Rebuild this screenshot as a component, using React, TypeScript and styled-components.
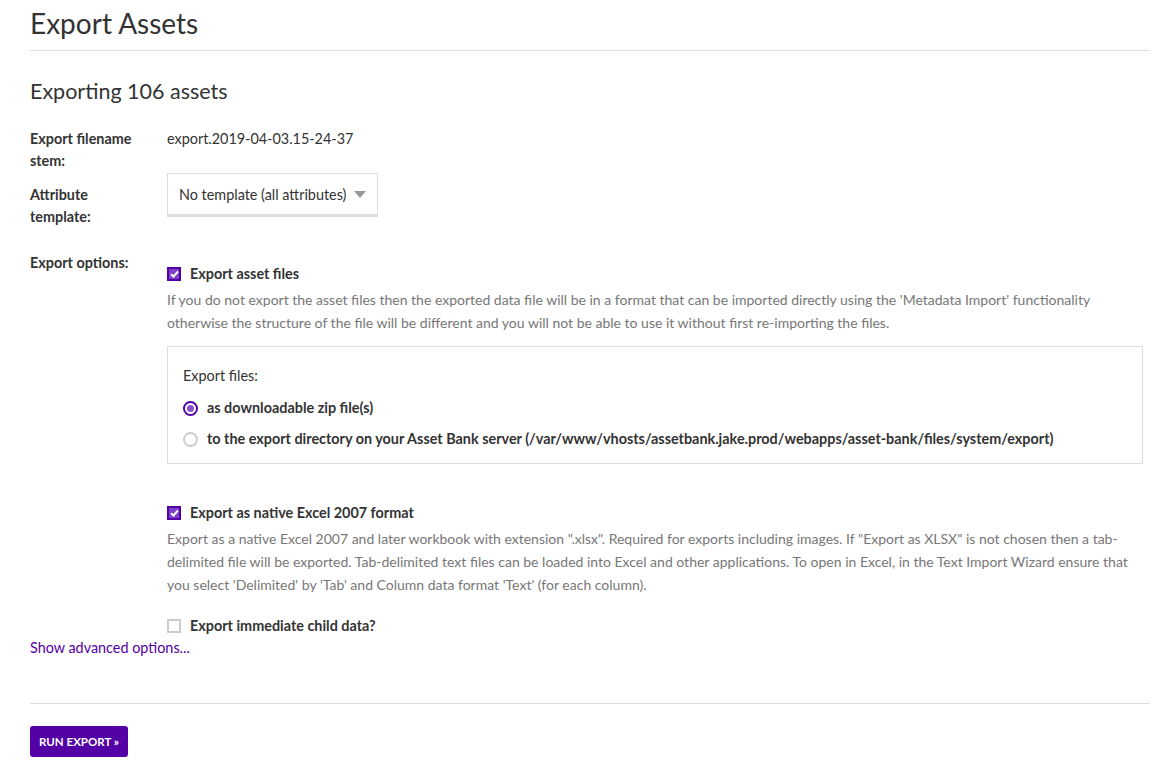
import React, { FunctionComponent } from "react";
import styled, { createGlobalStyle } from "styled-components";

const GlobalStyle = createGlobalStyle`
  body {
    margin: 0;
    background: #fff;
    color: #333;
    font-family: Lato, "Open Sans", sans-serif;
    font-size: 14.4px;
  }
`;

const purple = "#5300a7";

const Page = styled.div`
  padding: 0 8px 11px 30px;
`;

const Title = styled.h1`
  margin: 0;
  padding: 6px 0 10px;
  font-size: 28px;
  font-weight: 400;
  line-height: 34px;
  border-bottom: 1px solid #ddd;
`;

const SubTitle = styled.h2`
  margin: 0;
  padding: 27px 0 24px;
  font-size: 21.5px;
  font-weight: 400;
  line-height: 26px;
`;

const Row = styled.div<{ gap?: number }>`
  display: grid;
  grid-template-columns: 137px 1fr;
  margin-bottom: ${p => p.gap ?? 0}px;
`;

const Label = styled.div`
  font-weight: 700;
  line-height: 22px;
  padding-right: 30px;
`;

const Value = styled.div`
  line-height: 22px;
`;

const Select = styled.div`
  display: inline-flex;
  align-items: center;
  gap: 8px;
  padding: 0 11px;
  margin-top: -11px;
  border: 1px solid #ddd;
  border-bottom: 3px solid #ddd;
  box-sizing: border-box;
  height: 44px;
`;

const Caret = styled.span`
  width: 0;
  height: 0;
  border-left: 6px solid transparent;
  border-right: 6px solid transparent;
  border-top: 7px solid #999;
`;

const Options = styled.div`
  padding-top: 11px;
`;

const CheckRow = styled.label`
  display: flex;
  align-items: center;
  gap: 9px;
  font-weight: 700;
  line-height: 22px;
`;

const Box = styled.span<{ checked?: boolean }>`
  width: 14px;
  height: 14px;
  box-sizing: border-box;
  display: inline-flex;
  align-items: center;
  justify-content: center;
  background: ${p => (p.checked ? "#7e3fc9" : "#fff")};
  border: 2px solid ${p => (p.checked ? purple : "#ccc")};
`;

const Help = styled.p`
  margin: 3px 0 0;
  color: #777;
  font-size: 14px;
  line-height: 23px;
`;

const FilesPanel = styled.div`
  margin: 12px 7px 0 0;
  padding: 18px 15px 4px;
  border: 1px solid #ddd;
`;

const PanelTitle = styled.div`
  line-height: 22px;
  margin-bottom: 10px;
`;

const RadioRow = styled.label`
  display: flex;
  align-items: center;
  gap: 9px;
  font-weight: 700;
  line-height: 22px;
  margin-bottom: 9px;
`;

const Radio = styled.span<{ checked?: boolean }>`
  width: 15px;
  height: 15px;
  box-sizing: border-box;
  border-radius: 50%;
  border: 2px solid ${p => (p.checked ? purple : "#ccc")};
  display: inline-flex;
  align-items: center;
  justify-content: center;

  &::after {
    content: "";
    display: ${p => (p.checked ? "block" : "none")};
    width: 7px;
    height: 7px;
    border-radius: 50%;
    background: #8a4fd0;
  }
`;

const Section = styled.div<{ top: number }>`
  margin-top: ${p => p.top}px;
`;

const AdvancedLink = styled.a`
  display: block;
  color: ${purple};
  text-decoration: none;
  line-height: 22px;
`;

const Divider = styled.hr`
  border: 0;
  border-top: 1px solid #ddd;
  margin: 44px 0 22px;
`;

const RunButton = styled.button`
  background: ${purple};
  color: #fff;
  border: 0;
  border-radius: 3px;
  height: 31px;
  padding: 0 9px;
  font-family: inherit;
  font-size: 11.5px;
  font-weight: 700;
  text-transform: uppercase;
`;

const Tick: FunctionComponent = () => (
  <svg width="9" height="8" viewBox="0 0 9 8">
    <path d="M1 4.2 L3.5 6.5 L8 1.5" stroke="#fff" strokeWidth="2" fill="none" />
  </svg>
);

const Check: FunctionComponent<{ checked?: boolean; label: string }> = ({ checked, label }) => (
  <CheckRow>
    <Box checked={checked}>{checked && <Tick />}</Box>
    {label}
  </CheckRow>
);

export default function App() {
  return (
    <Page>
      <GlobalStyle />
      <Title>Export Assets</Title>
      <SubTitle>Exporting 106 assets</SubTitle>

      <Row gap={12}>
        <Label>Export filename stem:</Label>
        <Value>export.2019-04-03.15-24-37</Value>
      </Row>

      <Row gap={24}>
        <Label>Attribute template:</Label>
        <div>
          <Select>
            No template (all attributes) <Caret />
          </Select>
        </div>
      </Row>

      <Row>
        <Label>Export options:</Label>
        <Options>
          <Check checked label="Export asset files" />
          <Help>
            If you do not export the asset files then the exported data file will be in a format that can be imported
            directly using the 'Metadata Import' functionality otherwise the structure of the file will be different
            and you will not be able to use it without first re-importing the files.
          </Help>
          <FilesPanel>
            <PanelTitle>Export files:</PanelTitle>
            <RadioRow>
              <Radio checked />
              as downloadable zip file(s)
            </RadioRow>
            <RadioRow>
              <Radio />
              to the export directory on your Asset Bank server
              (/var/www/vhosts/assetbank.jake.prod/webapps/asset-bank/files/system/export)
            </RadioRow>
          </FilesPanel>

          <Section top={38}>
            <Check checked label="Export as native Excel 2007 format" />
            <Help>
              Export as a native Excel 2007 and later workbook with extension ".xlsx". Required for exports including
              images. If "Export as XLSX" is not chosen then a tab-delimited file will be exported. Tab-delimited text
              files can be loaded into Excel and other applications. To open in Excel, in the Text Import Wizard ensure
              that you select 'Delimited' by 'Tab' and Column data format 'Text' (for each column).
            </Help>
          </Section>

          <Section top={19}>
            <Check label="Export immediate child data?" />
          </Section>
        </Options>
      </Row>

      <AdvancedLink href="#">Show advanced options...</AdvancedLink>
      <Divider />
      <RunButton>Run Export »</RunButton>
    </Page>
  );
}
